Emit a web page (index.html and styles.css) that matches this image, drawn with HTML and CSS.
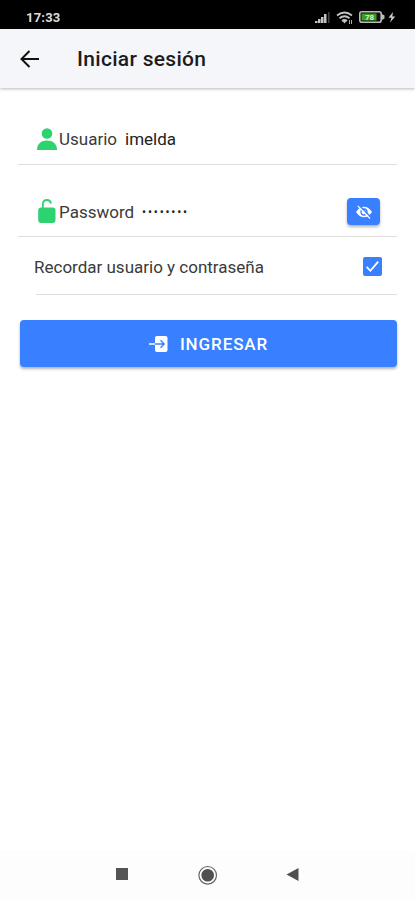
FILE: index.html
```html
<!DOCTYPE html>
<html lang="es">
<head>
    <meta charset="utf-8">
    <meta name="viewport" content="width=device-width, initial-scale=1">
    <title>Iniciar sesión</title>
    <link rel="stylesheet" href="styles.css">
</head>
<body>
    <div class="status-bar">
        <span class="clock">17:33</span>
        <svg class="status-icons" width="82" height="16" viewBox="0 0 82 16">
            <!-- signal -->
            <g fill="#c4c4c4">
                <rect x="0" y="12" width="2.500" height="2"/>
                <rect x="3" y="10" width="2.500" height="4"/>
                <rect x="6" y="8" width="2.500" height="6"/>
                <rect x="9" y="5" width="2.500" height="9"/>
                <rect x="13" y="3" width="1.500" height="11" fill="#444"/>
            </g>
            <!-- wifi -->
            <g fill="none" stroke="#c4c4c4" stroke-width="1.800">
                <path d="M22 6.500Q29.500 .5 37 6.500"/>
                <path d="M24.500 9.300Q29.500 5.300 34.500 9.300"/>
                <path d="M27 12Q29.500 10 32 12"/>
            </g>
            <path d="M27.500 12h4l-2 2.500z" fill="#c4c4c4"/>
            <path d="M34.500 11v4M36.500 11v4" stroke="#aaa"/>
            <!-- battery -->
            <rect x="44.800" y="2.800" width="21.400" height="10.400" rx="2" fill="#111" stroke="#bbb" stroke-width="1.600"/>
            <rect x="46.500" y="4.500" width="15" height="7" fill="#3c9c20"/>
            <path d="M67 5l2.500 1.500v3l-2.500 1.500z" fill="#bbb"/>
            <text class="battery-level" x="50" y="11.200">78</text>
            <path d="M78 3l-4.500 5.700h3L75 13.500l5.300-6h-3z" fill="#ccc"/>
        </svg>
    </div>

    <header class="toolbar">
        <svg class="back" width="20" height="20" viewBox="0 0 20 20">
            <path d="M9.500 2L1.500 10L9.500 18M2 10H19" fill="none" stroke="#111" stroke-width="2"/>
        </svg>
        <h1>Iniciar sesión</h1>
    </header>

    <main class="content">
        <div class="item user">
            <svg class="field-icon" width="22" height="24" viewBox="0 0 22 24">
                <circle cx="11" cy="6.500" r="5.300" fill="#2dd36f"/>
                <path d="M1 23C1 16.500 5.500 13.500 11 13.500S21 16.500 21 23Z" fill="#2dd36f"/>
            </svg>
            <span class="label">Usuario</span>
            <span class="value">imelda</span>
        </div>

        <div class="item password">
            <svg class="field-icon" width="22" height="26" viewBox="0 0 22 26">
                <path d="M6.800 10V5.500Q6.800 1 11 1Q14.200 1 15 4.500" fill="none" stroke="#2dd36f" stroke-width="1.800"/>
                <rect x="2.200" y="8.500" width="17.300" height="15.500" rx="3" fill="#2dd36f"/>
            </svg>
            <span class="label">Password</span>
            <span class="value dots">••••••••</span>
            <button class="toggle">
                <svg width="18" height="16" viewBox="0 0 18 16">
                    <path d="M1 8Q4.500 2.700 9 2.700T17 8Q13.500 13.300 9 13.300T1 8Z" fill="#fff"/>
                    <circle cx="9" cy="8" r="3" fill="none" stroke="#3880ff" stroke-width="1.300"/>
                    <path d="M3.800 1L16 13.200" stroke="#3880ff" stroke-width="1.500"/>
                    <path d="M2.800 1.800L15 14.500" stroke="#fff" stroke-width="1.200"/>
                </svg>
            </button>
        </div>

        <div class="item remember">
            <span class="label">Recordar usuario y contraseña</span>
            <span class="checkbox">
                <svg width="19" height="19" viewBox="0 0 20 20">
                    <path d="M3.800 10.500L7.800 14.500L16 4.800" fill="none" stroke="#fff" stroke-width="1.900"/>
                </svg>
            </span>
        </div>

        <button class="submit">
            <svg width="20" height="18" viewBox="0 0 20 18">
                <path d="M8 1H16.500Q18.500 1 18.500 3V15Q18.500 17 16.500 17H8Q6 17 6 15V3Q6 1 8 1Z" fill="#fff"/>
                <path d="M6 9H15M11.500 5.300L15.200 9L11.500 12.700" fill="none" stroke="#3880ff" stroke-width="1.400"/>
                <path d="M0 9H6" stroke="#fff" stroke-width="1.500"/>
            </svg>
            <span>INGRESAR</span>
        </button>
    </main>

    <nav class="nav-bar">
        <svg width="20" height="20" viewBox="0 0 20 20">
            <rect x="4" y="3" width="12" height="12" fill="#555"/>
        </svg>
        <svg width="20" height="20" viewBox="0 0 20 20">
            <circle cx="9.700" cy="10.300" r="8.800" fill="none" stroke="#666" stroke-width="1.200"/>
            <circle cx="9.700" cy="10.300" r="6.300" fill="#505050"/>
        </svg>
        <svg width="20" height="20" viewBox="0 0 20 20">
            <path d="M2.500 9.500L14.500 3V16Z" fill="#505050"/>
        </svg>
    </nav>
</body>
</html>
```
FILE: styles.css
```css
* { box-sizing: border-box; }
body { margin: 0; height: 900px; display: flex; flex-direction: column; background: #fff; color: #222; font-family: Roboto, sans-serif; font-size: 17px; }
button { border: none; padding: 0; font-family: inherit; background: #3880ff; color: #fff; display: flex; align-items: center; justify-content: center; }
svg { display: block; flex: none; }

.status-bar { height: 29px; background: #000; display: flex; justify-content: space-between; padding: 9px 18px 0 26px; }
.clock { color: #ddd; font-size: 13px; line-height: 18px; font-weight: 700; letter-spacing: 0.2px; }
.battery-level { font-size: 8px; font-weight: 700; fill: #d8f5c8; }

.toolbar { height: 59px; background: #f4f6fa; display: flex; align-items: center; padding-left: 20px; box-shadow: 0 1px 3px rgba(0,0,0,0.28); }
.toolbar h1 { margin: 0 0 0 37px; font-size: 21px; font-weight: 500; letter-spacing: 0.3px; color: #1c1c1c; }

.content { flex: 1; padding: 24px 18px 0 18px; }
.item { display: flex; align-items: center; border-bottom: 1px solid #dedede; padding-left: 18px; }
.user { height: 53px; padding-top: 2px; }
.password { height: 72px; padding-top: 22px; }
.remember { height: 58px; margin-left: 18px; padding: 2px 15px 0 0; }
.remember .label { margin-left: -2px; }
.field-icon { margin-right: 1px; }
.label { color: #3a3a3a; }
.value { margin-left: 8px; }
.dots { font-size: 12px; letter-spacing: 1.8px; }
.toggle { width: 33px; height: 27px; margin-left: auto; margin-right: 17px; border-radius: 4px; box-shadow: 0 2px 3px rgba(0,0,0,0.3); }
.checkbox { width: 19px; height: 19px; margin-left: auto; background: #3880ff; border-radius: 2px; }
.submit { width: 377px; height: 47px; margin: 25px 0 0 2px; border-radius: 4px; box-shadow: 0 2px 3px rgba(0,0,0,0.3); font-size: 17px; font-weight: 500; letter-spacing: 0.9px; gap: 11px; }

.nav-bar { height: 50px; background: #fdfdfd; display: flex; justify-content: center; gap: 66px; padding-top: 15px; }
```
